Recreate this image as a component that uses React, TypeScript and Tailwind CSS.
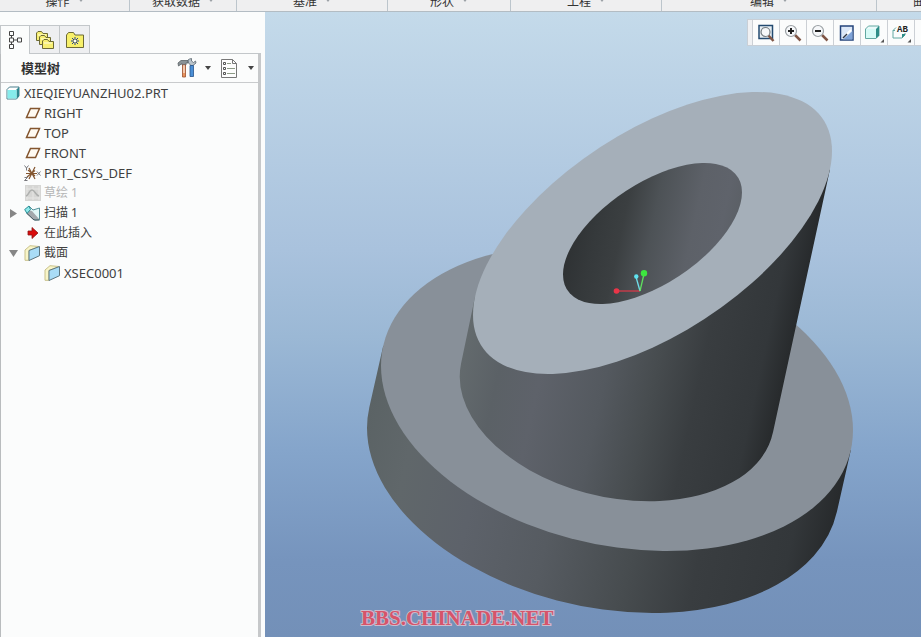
import type { ReactNode } from 'react'

type TreeItem = {
  label: string
  icon: ReactNode
  level: number
  state?: 'open' | 'closed'
  muted?: boolean
  cjk?: boolean
}

const ribbonGroups = ['操作', '获取数据', '基准', '形状', '工程', '编辑']

function PartIcon() {
  return (
    <svg width="14" height="14" viewBox="0 0 14 14" aria-hidden="true">
      <path d="M1 3.500 3.500 1H13v9l-2.500 3H1Z" fill="#fff" stroke="#4a7f8c" />
      <path d="M10.500 3.500 13 1v9l-2.500 3Z" fill="#2d8890" />
      <path d="M1.500 4h9v8.500h-9Z" fill="#86ecec" />
    </svg>
  )
}

function PlaneIcon() {
  return (
    <svg width="16" height="16" viewBox="0 0 16 16" aria-hidden="true">
      <path d="M5.500 3.500h9l-4 9h-9Z" fill="#fffaf2" stroke="#83552f" strokeWidth="1.500" />
    </svg>
  )
}

function CsysIcon() {
  return (
    <svg width="17" height="16" viewBox="0 0 17 16" fill="none" aria-hidden="true">
      <path d="M2 8.500h11M5 3l6 11M11 2 5 14M3 12l8-6.500M4 5l7 6" stroke="#83552f" strokeWidth="1.200" />
      <path d="m13 6.500 3.500 4m0-4-3.500 4M.5.500l2 2.500L4.500.500M2.500 3v2.500M.5 12.500h3l-3 3h3" stroke="#77777c" />
    </svg>
  )
}

function SketchIcon() {
  return (
    <svg width="16" height="16" viewBox="0 0 16 16" fill="none" aria-hidden="true">
      <path d="M0 0h16v16H0Z" fill="#d6d6d4" />
      <path d="M2 1v14M8 1v14M14 1v14M1 4h14M1 13h14" stroke="#e6e6e4" />
      <path d="M1 11c3-1 3-6 6-6s3 5 7 6" stroke="#aeb0ae" strokeWidth="1.500" />
    </svg>
  )
}

function SweepIcon() {
  return (
    <svg width="17" height="16" viewBox="0 0 17 16" aria-hidden="true">
      <path d="M5 1l4 4 6.500-2v11.500L11 15 4 8Z" fill="#e2f7f7" stroke="#54939a" />
      <path d="m4 5 4 1 7.500 8.500H9L2 8Z" fill="#a3a8ac" />
      <path d="M.7 4.500 5 1l1.500 3.500L3 8.500Z" fill="#8deaea" stroke="#2b8d96" />
      <path d="m3 8.500 7 6.500h5.500" fill="none" stroke="#3f545c" />
    </svg>
  )
}

function InsertIcon() {
  return (
    <svg width="16" height="16" viewBox="0 0 16 16" aria-hidden="true">
      <path d="M3 6h4V2.500L13 8l-6 5.500V10H3Z" fill="#d90d0d" stroke="#8d1717" strokeWidth=".8" />
    </svg>
  )
}

function SectionIcon() {
  return (
    <svg width="17" height="16" viewBox="0 0 17 16" aria-hidden="true">
      <path d="M1 5 6 .7l9 .8-10 4v9.800H1Z" fill="#f8f5c8" stroke="#c9c18a" />
      <path d="m5 5.500 10.500-4v9.200L5 15.500Z" fill="#a9dcf6" stroke="#5d7680" />
    </svg>
  )
}

const treeItems: TreeItem[] = [
  { label: 'XIEQIEYUANZHU02.PRT', icon: <PartIcon />, level: 0 },
  { label: 'RIGHT', icon: <PlaneIcon />, level: 1 },
  { label: 'TOP', icon: <PlaneIcon />, level: 1 },
  { label: 'FRONT', icon: <PlaneIcon />, level: 1 },
  { label: 'PRT_CSYS_DEF', icon: <CsysIcon />, level: 1 },
  { label: '草绘 1', icon: <SketchIcon />, level: 1, muted: true, cjk: true },
  { label: '扫描 1', icon: <SweepIcon />, level: 1, state: 'closed', cjk: true },
  { label: '在此插入', icon: <InsertIcon />, level: 1, cjk: true },
  { label: '截面', icon: <SectionIcon />, level: 1, state: 'open', cjk: true },
  { label: 'XSEC0001', icon: <SectionIcon />, level: 2 },
]

const indent = ['pl-[3px]', 'pl-[23px]', 'pl-[43px]']

function Caret({ className = 'text-[#444]' }: { className?: string }) {
  return (
    <svg className={className} width="6" height="4" viewBox="0 0 6 4" aria-hidden="true">
      <path d="M0 0h6L3 4Z" fill="currentColor" />
    </svg>
  )
}

function Ribbon() {
  return (
    <header className="grid h-3 shrink-0 grid-cols-[130fr_107fr_151fr_123fr_151fr_215fr_44fr] grid-rows-1 overflow-hidden border-b border-[#b3bcc3] bg-[#efeff0]">
      {ribbonGroups.map((name) => (
        <button key={name} className="flex min-w-0 items-end justify-center gap-2 border-r border-[#bcc5cc] pb-px text-xs leading-4 text-[#333]">
          <span>{name}</span>
          <span className="flex pb-2"><Caret className="text-[#9a9fa4]" /></span>
        </button>
      ))}
      <button className="flex min-w-0 items-end pb-px pl-9 text-xs leading-4 whitespace-nowrap text-[#333]">曲面</button>
    </header>
  )
}

function Folder({ x, y }: { x: number; y: number }) {
  return (
    <g transform={`translate(${x} ${y})`}>
      <path d="M.5 9.500V2L2 .5h3.500L7 2.500h4.500v7Z" fill="#f7ef72" stroke="#6d6a35" />
      <path d="M2 4h8" stroke="#fffce0" />
    </g>
  )
}

function PanelTabs() {
  return (
    <div className="flex h-[29px] items-end pr-1" role="tablist">
      <button role="tab" aria-selected="true" aria-label="模型树" className="flex h-[29px] w-[29px] items-center justify-center border-t border-l border-[#c3c7ca] bg-[#fbfcfc]">
        <svg width="14" height="20" viewBox="0 0 14 20" fill="none" stroke="#444">
          <path d="M1.500 1.500h4v4h-4ZM1.500 8h4v4h-4ZM1.500 14.500h4v4h-4ZM9.500 8h4v4h-4ZM3.500 5.500V8m0 4v2.500m2-4.500h4" />
        </svg>
      </button>
      <button role="tab" aria-selected="false" aria-label="文件夹浏览器" className="flex h-[29px] w-[31px] items-center justify-center border border-[#c3c7ca] bg-[#eeeff1]">
        <svg width="20" height="20" viewBox="0 0 20 20">
          <Folder x={1} y={1} />
          <Folder x={4} y={5} />
          <Folder x={7} y={9} />
        </svg>
      </button>
      <button role="tab" aria-selected="false" aria-label="收藏夹" className="flex h-[29px] w-[30px] items-center justify-center border border-l-0 border-[#c3c7ca] bg-[#eeeff1]">
        <svg width="18" height="16" viewBox="0 0 18 16">
          <path d="M.5 15.500V3l2-2.500h5L9 3h8.500v12.500Z" fill="#f7f06a" stroke="#6d6a35" />
          <path d="M9 5v8M5 9h8M6 6l6 6m0-6-6 6" stroke="#243e94" />
          <path d="M8 8h2v2H8Z" fill="#fff" />
        </svg>
      </button>
      <span className="flex-1 border-b border-[#c3c7ca]" />
    </div>
  )
}

function PanelHeader() {
  return (
    <div className="flex h-[29px] items-center border-b border-[#c9cbcd] pr-1 pl-5">
      <h2 className="flex-1 text-[13px] leading-5 font-bold text-[#333]">模型树</h2>
      <button aria-label="设置" className="mr-2.5 flex items-center gap-2">
        <svg width="20" height="20" viewBox="0 0 20 20" aria-hidden="true">
          <path d="M1 5 4 2.500h7V5H9v2H5V5.500L1.500 8Z" fill="#8a9296" stroke="#5a6266" strokeWidth=".8" />
          <path d="M5.500 7h3v12h-3Z" fill="#e8935d" stroke="#994f2f" strokeWidth=".8" />
          <path d="M7 7v8" stroke="#fff" />
          <path d="m11 2 .5 3 2.500 2.500h2L19 5l-.5-2-2 1.500L14.500 3V.500L12.500 1Z" fill="#b9c3ca" stroke="#59656d" strokeWidth=".8" />
          <path d="M13 7.500h3.500v11H13Z" fill="#4b8fd6" stroke="#27548c" strokeWidth=".8" />
        </svg>
        <Caret />
      </button>
      <button aria-label="显示" className="flex items-center gap-2.5">
        <svg width="17" height="19" viewBox="0 0 17 19" fill="none" aria-hidden="true">
          <path d="M.5.500h11l4 4v14H.5Z" fill="#fdfdfd" stroke="#777" />
          <path d="M11.500.500v4h4" stroke="#777" />
          <path d="M6 4.500h4M6 9.500h8M6 14.500h8" stroke="#8c9b86" />
          <path d="M2.500 3.500h2v2h-2ZM2.500 8.500h2v2h-2ZM2.500 13.500h2v2h-2Z" stroke="#555" />
        </svg>
        <Caret />
      </button>
    </div>
  )
}

function TreeRow({ item }: { item: TreeItem }) {
  return (
    <li role="treeitem" className={`relative flex h-5 items-center gap-[3px] ${indent[item.level]}`}>
      {item.state && (
        <button
          aria-label={item.state === 'open' ? '折叠' : '展开'}
          className="absolute left-1.5 flex size-3 items-center justify-center"
        >
          <svg width="9" height="9" viewBox="0 0 9 9" fill="#868686" aria-hidden="true">
            <path d={item.state === 'open' ? 'M0 1h9L4.500 8Z' : 'M1 0l7 4.500L1 9Z'} />
          </svg>
        </button>
      )}
      <span className="flex w-[17px] shrink-0 justify-center">{item.icon}</span>
      <span className={`${item.cjk ? 'text-[12px]' : 'text-[13px]'} ${item.muted ? 'text-[#b5b5b5]' : 'text-[#404040]'}`}>
        {item.label}
      </span>
    </li>
  )
}

function ModelTree() {
  return (
    <aside className="flex w-[265px] shrink-0 flex-col bg-[#fbfcfc] pt-[13px]">
      <PanelTabs />
      <div className="mr-1 flex flex-1 flex-col border-r-3 border-l border-r-[#c6c8ca] border-l-[#b9bcbe]">
        <PanelHeader />
        <ul role="tree" className="leading-5">
          {treeItems.map((item) => (
            <TreeRow key={item.label} item={item} />
          ))}
        </ul>
      </div>
    </aside>
  )
}

function Magnifier({ sign }: { sign: 'plus' | 'minus' }) {
  return (
    <svg width="18" height="18" viewBox="0 0 18 18" fill="none">
      <path d="m11 11 5.500 5.500" stroke="#805646" strokeWidth="2.500" />
      <circle cx="7" cy="7" r="5.500" fill="#f6f8fa" stroke="#9aa0a4" strokeWidth="1.200" />
      <path d={sign === 'plus' ? 'M4 7h6M7 4v6' : 'M4 7h6'} stroke="#222" strokeWidth="2" />
    </svg>
  )
}

const Flyout = () => <path d="M20 16v3.500h-3.500Z" fill="#555" />

const viewTools = [
  {
    label: '重新调整',
    icon: (
      <svg width="18" height="18" viewBox="0 0 18 18" fill="none">
        <path d="M2 1.500h13.500v13H2Z" fill="#e9f0f5" stroke="#234a70" strokeWidth="1.500" />
        <path d="m11 11 5.500 6" stroke="#805646" strokeWidth="2.500" />
        <circle cx="8.500" cy="8" r="4.500" fill="#f6f8fa" stroke="#757d82" strokeWidth="1.200" />
      </svg>
    ),
  },
  { label: '放大', icon: <Magnifier sign="plus" /> },
  { label: '缩小', icon: <Magnifier sign="minus" /> },
  {
    label: '重画',
    icon: (
      <svg width="16" height="18" viewBox="0 0 16 18" fill="none">
        <path d="M1.500 2h12.500v14H1.500Z" fill="#dce8f8" stroke="#24437a" strokeWidth="1.500" />
        <path d="M13.500 7v8.500H4Z" fill="#7fa3d8" />
        <path d="m6 12 6-6" stroke="#fff" strokeWidth="2" />
        <path d="m4 14 4-4" stroke="#303848" strokeWidth="1.500" />
      </svg>
    ),
  },
  {
    label: '显示样式',
    icon: (
      <svg width="20" height="20" viewBox="0 0 20 20">
        <path d="m1.500 6 3-3H15v9.500l-3 3H1.500Z" fill="#eafafa" stroke="#62a8a2" />
        <path d="m12 6 3-3v9.500l-3 3Z" fill="#2d8d87" />
        <path d="M2 6h10v9H2Z" fill="#d6faf6" />
        <Flyout />
      </svg>
    ),
  },
  {
    label: '已保存方向',
    icon: (
      <svg width="20" height="20" viewBox="0 0 20 20" fill="none">
        <path d="M5 4.500 2 7.500V15h9l3-3v-2M2 7.500h2" stroke="#62a8a2" />
        <path d="M11 11h3v1l-3 3Z" fill="#2d8d87" />
        <text x="6" y="9" fill="#222" fontSize="9" className="font-['Liberation_Mono',monospace] font-bold">AB</text>
        <Flyout />
      </svg>
    ),
  },
]

function ViewToolbar() {
  return (
    <div className="absolute top-[7px] right-0 flex border-y border-l border-[#c9cfd6] bg-[#fbfcfc]" role="toolbar">
      <span className="w-1 bg-[#f0f1f3]" />
      {viewTools.map((tool) => (
        <button key={tool.label} aria-label={tool.label} className="flex h-[25px] w-[27px] items-center justify-center border-l border-[#ccd0d5]">
          {tool.icon}
        </button>
      ))}
      <span className="w-[7px] border-l border-[#ccd0d5]" />
    </div>
  )
}

// Ellipses are unit circles sheared by a matrix: (half width, slope, 0, half height, cx, cy).
function PartModel() {
  return (
    <svg
      className="absolute inset-0 size-full"
      viewBox="265 12 656 625"
      preserveAspectRatio="xMidYMid slice"
      role="img"
      aria-label="XIEQIEYUANZHU02"
    >
      <defs>
        <linearGradient id="flange" gradientUnits="userSpaceOnUse" x1="383" y1="346" x2="851" y2="450">
          <stop offset="0" stopColor="#5b6365" />
          <stop offset=".1" stopColor="#60676a" />
          <stop offset=".25" stopColor="#5d626a" />
          <stop offset=".42" stopColor="#565b61" />
          <stop offset=".6" stopColor="#474c4f" />
          <stop offset=".74" stopColor="#393d40" />
          <stop offset=".92" stopColor="#33373a" />
          <stop offset="1" stopColor="#272a2c" />
        </linearGradient>
        <linearGradient id="tube" gradientUnits="userSpaceOnUse" x1="461" y1="364" x2="773" y2="432">
          <stop offset="0" stopColor="#636a6d" />
          <stop offset=".12" stopColor="#5b6166" />
          <stop offset=".25" stopColor="#5e626a" />
          <stop offset=".45" stopColor="#54595f" />
          <stop offset=".6" stopColor="#474c4f" />
          <stop offset=".74" stopColor="#393d40" />
          <stop offset=".92" stopColor="#33373a" />
          <stop offset="1" stopColor="#272a2c" />
        </linearGradient>
        <linearGradient id="bore" gradientUnits="userSpaceOnUse" x1="563" y1="224" x2="742" y2="262">
          <stop offset="0" stopColor="#2c2f31" />
          <stop offset=".18" stopColor="#35393b" />
          <stop offset=".32" stopColor="#3b3f41" />
          <stop offset=".48" stopColor="#4d5256" />
          <stop offset=".7" stopColor="#5d6168" />
          <stop offset=".85" stopColor="#5f636b" />
          <stop offset="1" stopColor="#585d62" />
        </linearGradient>
        <clipPath id="flangeSide">
          <circle r="1" transform="matrix(236 32 0 149.600 603 460)" />
          <path d="M850.800 450.300 836.800 512.300 369.200 407.700 383.200 345.700Z" />
        </clipPath>
        <clipPath id="tubeSide">
          <circle r="1" transform="matrix(157.300 21.300 0 101 617 398)" />
          <path d="M461 363.800 475 296.800 830 169.200 773 432.200Z" />
        </clipPath>
        <clipPath id="boreEdge">
          <circle r="1" transform="matrix(89.500 -41 0 57.350 652.500 233.500)" />
        </clipPath>
      </defs>
      <rect x="350" y="300" width="520" height="320" fill="url(#flange)" clipPath="url(#flangeSide)" />
      <circle r="1" transform="matrix(236 32 0 149.600 617 398)" fill="#889099" />
      <rect x="450" y="160" width="390" height="350" fill="url(#tube)" clipPath="url(#tubeSide)" />
      <circle r="1" transform="matrix(179.500 -82 0 114.700 652.500 233)" fill="#a5afb9" />
      <rect x="560" y="160" width="190" height="150" fill="url(#bore)" clipPath="url(#boreEdge)" />
      <g fill="none" strokeWidth="1.300">
        <path d="M640 291h-23" stroke="#d63a4a" />
        <path d="m640 291-4-14" stroke="#6fe0ea" />
        <path d="m640 291 4-17" stroke="#5fe05f" />
      </g>
      <circle cx="616.500" cy="291" r="2.800" fill="#ea3548" />
      <circle cx="636.300" cy="276.500" r="2.200" fill="#5fe3f0" />
      <circle cx="644" cy="273.200" r="3.200" fill="#3de63f" />
    </svg>
  )
}

export default function App() {
  return (
    <div className="flex h-screen flex-col overflow-hidden bg-[#fbfcfc] font-['Noto_Sans','Noto_Sans_CJK_SC',sans-serif]">
      <Ribbon />
      <div className="flex min-h-0 flex-1">
        <ModelTree />
        <main className="relative min-w-0 flex-1 overflow-hidden bg-linear-[to_bottom,#c4daea_0%,#a9c2dd_38%,#9bb8d5_52%,#85a5cb_70%,#7694bd_88%,#7390b8_100%]">
          <PartModel />
          <ViewToolbar />
          <p className="absolute bottom-[7px] left-24 font-['Liberation_Serif',serif] text-[21px] leading-6 font-bold text-[#d6546a] [-webkit-text-stroke:2px_#cdbccd] [paint-order:stroke]">
            BBS.CHINADE.NET
          </p>
        </main>
      </div>
    </div>
  )
}
